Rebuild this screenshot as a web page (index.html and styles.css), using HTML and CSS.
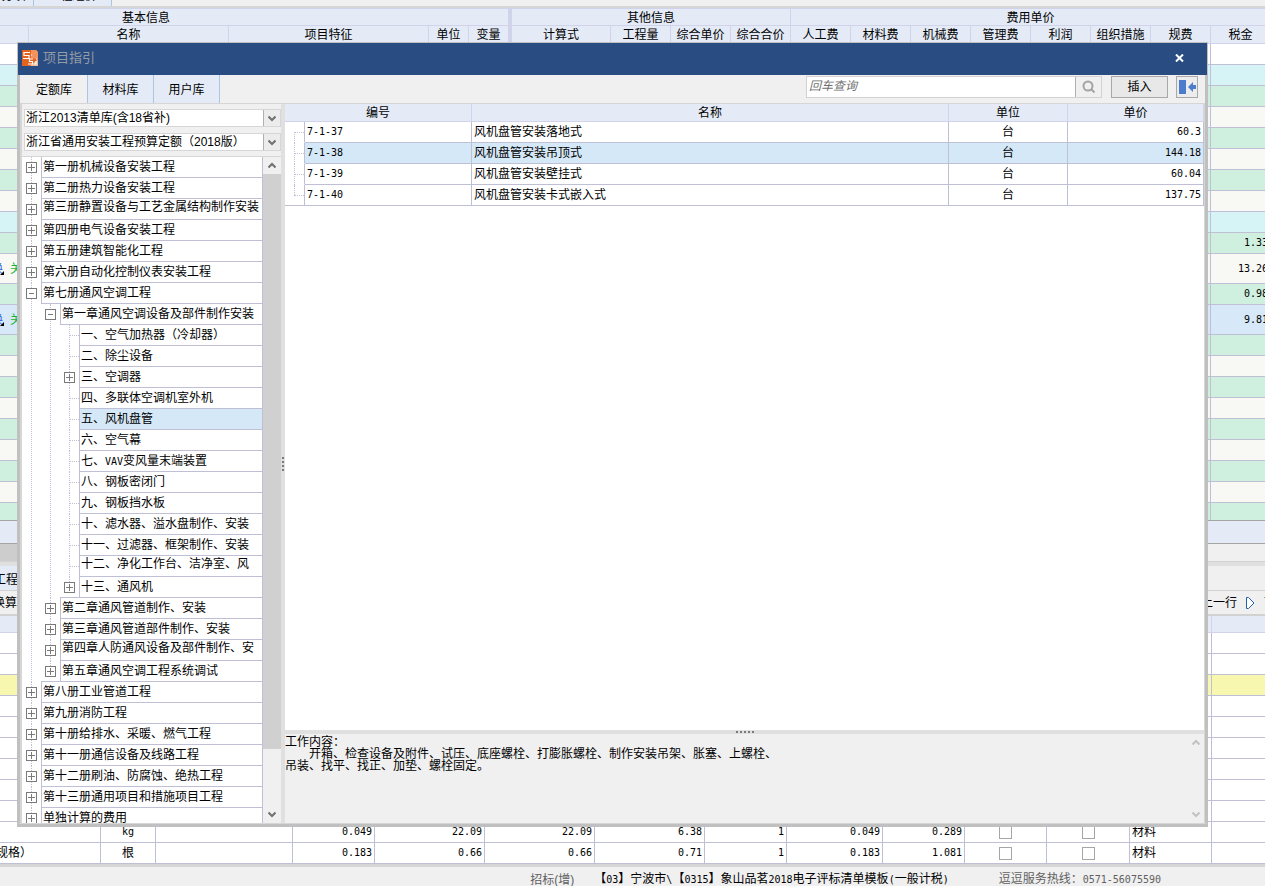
FILE: index.html
```html
<!DOCTYPE html>
<html lang="zh-CN">
<head>
<meta charset="utf-8">
<title>项目指引</title>
<link rel="stylesheet" href="styles.css">
</head>
<body>
<main class="app">
  <nav class="top-tabs">
    <button class="top-tab first" type="button">分部分项</button>
    <button class="top-tab" type="button">工程组价</button>
  </nav>
  <section class="bill">
    <table class="grid bill-grid">
      <colgroup>
        <col class="w-245"><col class="w-200"><col class="w-200"><col class="w-40"><col class="w-43"><col class="w-99">
        <col class="w-60"><col class="w-60"><col class="w-60"><col class="w-60"><col class="w-60"><col class="w-60"><col class="w-60"><col class="w-60"><col class="w-60"><col class="w-60"><col class="w-60">
      </colgroup>
      <thead>
        <tr class="groups"><th colspan="5" class="thick">基本信息</th><th colspan="4">其他信息</th><th colspan="8">费用单价</th></tr>
        <tr><th></th><th>名称</th><th>项目特征</th><th>单位</th><th class="thick">变量</th><th>计算式</th><th>工程量</th><th>综合单价</th><th>综合合价</th><th>人工费</th><th>材料费</th><th>机械费</th><th>管理费</th><th>利润</th><th>组织措施</th><th>规费</th><th>税金</th></tr>
      </thead>
      <tbody>
        <tr class="plain"><td></td><td colspan="15"></td><td></td></tr>
        <tr class="cyan"><td></td><td colspan="15"></td><td></td></tr>
        <tr class="green"><td></td><td colspan="15"></td><td></td></tr>
        <tr><td></td><td colspan="15"></td><td></td></tr>
        <tr class="green"><td></td><td colspan="15"></td><td></td></tr>
        <tr><td></td><td colspan="15"></td><td></td></tr>
        <tr class="green"><td></td><td colspan="15"></td><td></td></tr>
        <tr><td></td><td colspan="15"></td><td></td></tr>
        <tr class="cyan"><td></td><td colspan="15"></td><td></td></tr>
        <tr class="green"><td></td><td colspan="15"></td><td class="num">1.33</td></tr>
        <tr class="tall"><td><span class="marks"><span class="swap">换</span><svg class="corner" viewBox="0 0 4 4"><path d="M4 0v4H0z"/></svg><span class="link">关联</span></span></td><td colspan="15"></td><td class="num">13.26</td></tr>
        <tr class="green"><td></td><td colspan="15"></td><td class="num">0.98</td></tr>
        <tr class="tall current"><td><span class="marks"><span class="swap">换</span><svg class="corner" viewBox="0 0 4 4"><path d="M4 0v4H0z"/></svg><span class="link">关联</span></span></td><td colspan="15"></td><td class="num">9.81</td></tr>
        <tr class="green"><td></td><td colspan="15"></td><td></td></tr>
        <tr><td></td><td colspan="15"></td><td></td></tr>
        <tr class="green"><td></td><td colspan="15"></td><td></td></tr>
        <tr><td></td><td colspan="15"></td><td></td></tr>
        <tr class="green"><td></td><td colspan="15"></td><td></td></tr>
        <tr><td></td><td colspan="15"></td><td></td></tr>
        <tr class="green"><td></td><td colspan="15"></td><td></td></tr>
        <tr><td></td><td colspan="15"></td><td></td></tr>
        <tr class="green"><td></td><td colspan="15"></td><td></td></tr>
      </tbody>
    </table>
  </section>
  <div class="totals"></div>
  <div class="hscroll"><div class="hthumb"></div></div>
  <div class="gap-bar"></div>
  <nav class="detail-tabs"><button class="detail-tab" type="button">工程量计算</button></nav>
  <div class="toolbar">
    <button class="tool" type="button">换算</button>
    <div class="tool-set">
      <button class="tool" type="button">上一行</button>
      <svg class="play" viewBox="0 0 9 12"><path d="M.5 .5h2l5.500 5.500-5.500 5.500h-2z"/></svg>
      <button class="tool" type="button">下一行</button>
    </div>
  </div>
  <section class="detail">
    <table class="grid detail-grid">
      <colgroup>
        <col class="w-107"><col class="w-55"><col class="w-137"><col class="w-82"><col class="w-110"><col class="w-110"><col class="w-110"><col class="w-82"><col class="w-96"><col class="w-82"><col class="w-82"><col class="w-83"><col class="w-82"><col class="w-82">
      </colgroup>
      <thead><tr><th></th><th></th><th></th><th></th><th></th><th></th><th></th><th></th><th></th><th></th><th></th><th></th><th></th><th></th></tr></thead>
      <tbody>
        <tr><td></td><td colspan="12"></td><td></td></tr>
        <tr><td></td><td colspan="12"></td><td></td></tr>
        <tr class="yellow"><td></td><td colspan="12"></td><td></td></tr>
        <tr><td></td><td colspan="12"></td><td></td></tr>
        <tr><td></td><td colspan="12"></td><td></td></tr>
        <tr><td></td><td colspan="12"></td><td></td></tr>
        <tr><td></td><td colspan="12"></td><td></td></tr>
        <tr><td></td><td colspan="12"></td><td></td></tr>
        <tr><td></td><td colspan="12"></td><td></td></tr>
        <tr><td></td><td class="mid num">kg</td><td></td><td class="num">0.049</td><td class="num">22.09</td><td class="num">22.09</td><td class="num">6.38</td><td class="num">1</td><td class="num">0.049</td><td class="num">0.289</td><td class="mid"><input type="checkbox" aria-label="暂估"></td><td class="mid"><input type="checkbox" aria-label="甲供"></td><td>材料</td><td></td></tr>
        <tr><td>规格）</td><td class="mid">根</td><td></td><td class="num">0.183</td><td class="num">0.66</td><td class="num">0.66</td><td class="num">0.71</td><td class="num">1</td><td class="num">0.183</td><td class="num">1.081</td><td class="mid"><input type="checkbox" aria-label="暂估"></td><td class="mid"><input type="checkbox" aria-label="甲供"></td><td>材料</td><td></td></tr>
      </tbody>
    </table>
  </section>
  <footer class="status">
    <span class="muted">招标(增)</span>
    <span class="file">【<span class="n">03</span>】宁波市<span class="n">\</span>【<span class="n">0315</span>】象山品茗<span class="n">2018</span>电子评标清单模板<span class="n">(</span>一般计税<span class="n">)</span></span>
    <span class="muted">逗逗服务热线：<span class="n">0571-56075590</span></span>
  </footer>
</main>

<div class="dialog" role="dialog" aria-labelledby="dialog-title">
  <header class="title-bar">
    <svg class="logo" viewBox="0 0 16 16"><path fill="#e4631f" d="M0 0h14l2 2v14H0z"/><path fill="#f0935f" d="M9 0h5l2 2v7L9 8z"/><path fill="#f0b896" d="M8 16l8-7v7z"/><path fill="none" stroke="#fff" stroke-width="1.200" d="M8 2.500H2v3h5v3H1M9.500 4.500v1M11 9H7.500v2.500h3V14H6"/><path fill="none" stroke="#fff" stroke-width="1.200" d="M14.500 8.500v1M14 11v3h-2"/></svg>
    <h1 id="dialog-title">项目指引</h1>
    <button class="close" type="button" aria-label="关闭"><svg viewBox="0 0 9 8"><path d="M1 0.500l7 7M8 .5l-7 7"/></svg></button>
  </header>
  <div class="dialog-body">
    <div class="head">
      <div class="tabs" role="tablist">
        <button class="tab active" role="tab" aria-selected="true" type="button">定额库</button>
        <button class="tab" role="tab" type="button">材料库</button>
        <button class="tab" role="tab" type="button">用户库</button>
      </div>
      <div class="actions">
        <div class="search">
          <input type="text" placeholder="回车查询" aria-label="查询">
          <button type="button" aria-label="搜索"><svg viewBox="0 0 14 14"><circle cx="6" cy="6" r="4.500"/><path d="M9 9l3.500 3.500"/></svg></button>
        </div>
        <button class="insert" type="button">插入</button>
        <button class="dock" type="button" aria-label="停靠"><svg viewBox="0 0 20 16"><path d="M2 1h7v14H2zM11 8l5-5v3h3v4h-3v3z"/></svg></button>
      </div>
    </div>
    <div class="panes">
      <aside class="side">
        <div class="pick"><select aria-label="清单库"><option>浙江2013清单库(含18省补)</option></select><span class="drop"><svg viewBox="0 0 8 7"><path d="M.5 1.500L4 5l3.500-3.500"/></svg></span></div>
        <div class="pick"><select aria-label="定额"><option>浙江省通用安装工程预算定额（2018版）</option></select><span class="drop"><svg viewBox="0 0 8 7"><path d="M.5 1.500L4 5l3.500-3.500"/></svg></span></div>
        <div class="tree-box">
          <ul class="tree">
            <li><div class="row"><button class="knob plus" type="button" aria-label="展开"></button><span class="label">第一册机械设备安装工程</span></div></li>
            <li><div class="row"><button class="knob plus" type="button" aria-label="展开"></button><span class="label">第二册热力设备安装工程</span></div></li>
            <li><div class="row"><button class="knob plus" type="button" aria-label="展开"></button><span class="label long">第三册静置设备与工艺金属结构制作安装</span></div></li>
            <li><div class="row"><button class="knob plus" type="button" aria-label="展开"></button><span class="label">第四册电气设备安装工程</span></div></li>
            <li><div class="row"><button class="knob plus" type="button" aria-label="展开"></button><span class="label">第五册建筑智能化工程</span></div></li>
            <li><div class="row"><button class="knob plus" type="button" aria-label="展开"></button><span class="label">第六册自动化控制仪表安装工程</span></div></li>
            <li><div class="row"><button class="knob" type="button" aria-label="收起"></button><span class="label">第七册通风空调工程</span></div>
              <ul>
                <li><div class="row"><button class="knob" type="button" aria-label="收起"></button><span class="label">第一章通风空调设备及部件制作安装</span></div>
                  <ul>
                    <li><div class="row"><span class="leaf"></span><span class="label">一、空气加热器（冷却器）</span></div></li>
                    <li><div class="row"><span class="leaf"></span><span class="label">二、除尘设备</span></div></li>
                    <li><div class="row"><button class="knob plus" type="button" aria-label="展开"></button><span class="label">三、空调器</span></div></li>
                    <li><div class="row"><span class="leaf"></span><span class="label">四、多联体空调机室外机</span></div></li>
                    <li><div class="row"><span class="leaf"></span><span class="label chosen">五、风机盘管</span></div></li>
                    <li><div class="row"><span class="leaf"></span><span class="label">六、空气幕</span></div></li>
                    <li><div class="row"><span class="leaf"></span><span class="label">七、<span class="n">VAV</span>变风量末端装置</span></div></li>
                    <li><div class="row"><span class="leaf"></span><span class="label">八、钢板密闭门</span></div></li>
                    <li><div class="row"><span class="leaf"></span><span class="label">九、钢板挡水板</span></div></li>
                    <li><div class="row"><span class="leaf"></span><span class="label">十、滤水器、溢水盘制作、安装</span></div></li>
                    <li><div class="row"><span class="leaf"></span><span class="label">十一、过滤器、框架制作、安装</span></div></li>
                    <li><div class="row"><span class="leaf"></span><span class="label long">十二、净化工作台、洁净室、风</span></div></li>
                    <li class="last"><div class="row"><button class="knob plus" type="button" aria-label="展开"></button><span class="label">十三、通风机</span></div></li>
                  </ul>
                </li>
                <li><div class="row"><button class="knob plus" type="button" aria-label="展开"></button><span class="label">第二章通风管道制作、安装</span></div></li>
                <li><div class="row"><button class="knob plus" type="button" aria-label="展开"></button><span class="label">第三章通风管道部件制作、安装</span></div></li>
                <li><div class="row"><button class="knob plus" type="button" aria-label="展开"></button><span class="label long">第四章人防通风设备及部件制作、安</span></div></li>
                <li class="last"><div class="row"><button class="knob plus" type="button" aria-label="展开"></button><span class="label">第五章通风空调工程系统调试</span></div></li>
              </ul>
            </li>
            <li><div class="row"><button class="knob plus" type="button" aria-label="展开"></button><span class="label">第八册工业管道工程</span></div></li>
            <li><div class="row"><button class="knob plus" type="button" aria-label="展开"></button><span class="label">第九册消防工程</span></div></li>
            <li><div class="row"><button class="knob plus" type="button" aria-label="展开"></button><span class="label">第十册给排水、采暖、燃气工程</span></div></li>
            <li><div class="row"><button class="knob plus" type="button" aria-label="展开"></button><span class="label">第十一册通信设备及线路工程</span></div></li>
            <li><div class="row"><button class="knob plus" type="button" aria-label="展开"></button><span class="label">第十二册刷油、防腐蚀、绝热工程</span></div></li>
            <li><div class="row"><button class="knob plus" type="button" aria-label="展开"></button><span class="label">第十三册通用项目和措施项目工程</span></div></li>
            <li class="last"><div class="row"><button class="knob plus" type="button" aria-label="展开"></button><span class="label">单独计算的费用</span></div></li>
          </ul>
          <div class="scroll">
            <button type="button" aria-label="向上"><svg viewBox="0 0 8 7"><path d="M.5 5.500L4 2l3.500 3.500"/></svg></button>
            <div class="track"><div class="thumb"></div></div>
            <button type="button" aria-label="向下"><svg viewBox="0 0 8 7"><path d="M.5 1.500L4 5l3.500-3.500"/></svg></button>
          </div>
        </div>
      </aside>
      <div class="splitter"><i></i><i></i><i></i><i></i></div>
      <section class="main-pane">
        <div class="quota">
          <table class="quota-grid">
            <colgroup><col class="q-branch"><col class="q-code"><col><col class="q-unit"><col class="q-price"></colgroup>
            <thead><tr><th colspan="2">编号</th><th>名称</th><th>单位</th><th>单价</th></tr></thead>
            <tbody>
              <tr><td class="branch start"></td><td class="code">7-1-37</td><td>风机盘管安装落地式</td><td class="mid">台</td><td class="num">60.3</td></tr>
              <tr class="chosen"><td class="branch"></td><td class="code">7-1-38</td><td>风机盘管安装吊顶式</td><td class="mid">台</td><td class="num">144.18</td></tr>
              <tr><td class="branch"></td><td class="code">7-1-39</td><td>风机盘管安装壁挂式</td><td class="mid">台</td><td class="num">60.04</td></tr>
              <tr><td class="branch end"></td><td class="code">7-1-40</td><td>风机盘管安装卡式嵌入式</td><td class="mid">台</td><td class="num">137.75</td></tr>
            </tbody>
          </table>
        </div>
        <div class="hsplitter"><i></i><i></i><i></i><i></i><i></i></div>
        <div class="work">
          <div class="work-text">
            <p>工作内容：</p>
            <p class="indent">开箱、检查设备及附件、试压、底座螺栓、打膨胀螺栓、制作安装吊架、胀塞、上螺栓、</p>
            <p>吊装、找平、找正、加垫、螺栓固定。</p>
          </div>
          <div class="work-scroll">
            <svg viewBox="0 0 8 7"><path d="M.5 5.500L4 2l3.500 3.500"/></svg>
            <svg viewBox="0 0 8 7"><path d="M.5 1.500L4 5l3.500-3.500"/></svg>
          </div>
        </div>
      </section>
    </div>
  </div>
</div>
</body>
</html>
```

FILE: styles.css
```css
:root {
  --line: #bfbfd6;
  --head: #e4ebf7;
  --head-line: #d0d3ea;
  --panel: #f0f0f0;
  --pick: #d5e8f8;
}

* { box-sizing: border-box; }

body {
  margin: 0;
  height: 100vh;
  overflow: hidden;
  position: relative;
  background: var(--panel);
  color: #000;
  font: 12px/12px "Liberation Sans", "Noto Sans CJK SC", sans-serif;
}

button, input, select { font: inherit; color: inherit; margin: 0; }
button { padding: 0; border: 0; background: none; white-space: nowrap; }
h1, p, ul { margin: 0; padding: 0; }
ul { list-style: none; }
svg { display: block; flex: none; }

.n, .num, .code { font-family: "DejaVu Sans Mono", monospace; font-size: 10px; }

/* application window */
.app { height: 100%; display: flex; flex-direction: column; overflow: hidden; }
.app > * { flex: none; }

.top-tabs {
  height: 8px;
  display: flex;
  align-items: flex-end;
  overflow: hidden;
  border-bottom: 2px solid #d6d6d6;
}
.top-tab {
  width: 78px;
  height: 24px;
  padding-top: 8px;
  background: var(--head);
  border-right: 1px solid #a9c6e3;
  line-height: 12px;
}
.top-tab { display: flex; align-items: flex-start; justify-content: center; }
.top-tab.first { width: 64px; margin-left: -30px; }

.grid { table-layout: fixed; border-collapse: separate; border-spacing: 0; }
.grid th {
  padding: 0;
  font-weight: 400;
  text-align: center;
  background: var(--head);
  border-right: 1px solid var(--head-line);
  border-bottom: 1px solid var(--head-line);
}
.grid td {
  height: 21px;
  padding: 0 2px;
  border-right: 1px solid var(--line);
  border-bottom: 1px solid var(--line);
  white-space: nowrap;
  overflow: hidden;
}
.grid .num { text-align: right; }
.grid .mid { text-align: center; }

.app > .bill { flex: 1; overflow: hidden; min-height: 0; }
.bill-grid { width: 1487px; margin-left: -216px; background: #f8f9f5; }
.bill-grid th { height: 18px; padding-top: 1px; }
.bill-grid .groups th { border-top: 1px solid var(--head-line); }
.bill-grid .thick { border-right-width: 4px; }
.bill-grid .plain td { background: #fff; }
.bill-grid .cyan td { background: #d6f4f6; }
.bill-grid .green td { background: #d0f0df; }
.bill-grid .current td { background: #d7e8f8; }
.bill-grid .tall td { height: 30px; }
.marks { display: flex; justify-content: flex-end; align-items: flex-end; }
.swap { color: #2d5fe0; }
.corner { width: 4px; height: 4px; margin-right: 6px; margin-left: -3px; }
.link { color: #12b53a; margin-right: -8px; }

.w-245 { width: 245px; }
.w-200 { width: 200px; }
.w-137 { width: 137px; }
.w-110 { width: 110px; }
.w-107 { width: 107px; }
.w-99 { width: 99px; }
.w-96 { width: 96px; }
.w-83 { width: 83px; }
.w-82 { width: 82px; }
.w-60 { width: 60px; }
.w-55 { width: 55px; }
.w-43 { width: 43px; }
.w-40 { width: 40px; }

.totals { height: 24px; background: var(--head); border: solid #a5a5a5; border-width: 1px 0; }
.hscroll { height: 17px; background: var(--panel); }
.hthumb { width: 60%; height: 100%; background: #cdcdcd; }
.gap-bar { height: 5px; background: #e0e0e0; border-top: 1px solid #d2d2d2; }
.detail-tabs { height: 25px; border-bottom: 1px solid #d2d2d2; }
.detail-tab { height: 24px; margin-left: -6px; padding-top: 4px; background: var(--head); }
.toolbar {
  height: 25px;
  display: flex;
  align-items: center;
  justify-content: space-between;
  margin: 0 -35px 0 -7px;
  border-bottom: 2px solid #d2d2d2;
}
.tool-set { display: flex; align-items: center; gap: 9px; }
.play { width: 9px; height: 12px; fill: #fff; stroke: #2060a8; }

.detail { overflow: hidden; border-bottom: 3px solid #d6d6d6; }
.detail-grid { width: 1300px; margin-left: -6px; background: #fff; }
.detail-grid th { height: 17px; }
.detail-grid .yellow td { background: #f8f7b0; }
.detail-grid input {
  appearance: none;
  display: block;
  width: 13px;
  height: 13px;
  margin: 0 auto;
  background: #fff;
  border: 1px solid #a6a6a6;
}

.status {
  height: 19px;
  display: flex;
  align-items: center;
  justify-content: flex-end;
  gap: 50px;
  padding: 6px 104px 0 0;
  white-space: nowrap;
}
.status .file { margin-left: -30px; }
.muted { color: #606060; }

/* guide dialog */
.dialog {
  position: absolute;
  inset: 42px 57px 59px 17px;
  display: flex;
  flex-direction: column;
  border: solid #c0c0c0;
  border-width: 1px 1px 3px;
}
.title-bar {
  height: 32px;
  flex: none;
  display: flex;
  align-items: center;
  padding: 0 23px 2px 4px;
  background: #294d82;
}
.logo { width: 16px; height: 16px; }
.title-bar h1 { flex: 1; margin-left: 5px; font-size: 13px; line-height: 16px; font-weight: 400; color: #949ba5; }
.close svg { width: 9px; height: 8px; stroke: #fff; stroke-width: 2; }

.dialog-body {
  flex: 1;
  min-height: 0;
  display: flex;
  flex-direction: column;
  background: var(--panel);
  border: solid #c0c0c0;
  border-width: 0 2px;
  border-bottom: 1px solid #d6d6d6;
}
.head {
  flex: none;
  display: flex;
  height: 29px;
  padding-right: 7px;
  border-bottom: 1px solid #d6d6d6;
}
.tabs { display: flex; padding-left: 1px; flex: 1; }
.tab {
  width: 66px;
  height: 28px;
  padding-top: 2px;
  background: var(--head);
  border-right: 1px solid #a9c6e3;
}
.tab.active { width: 67px; background: var(--panel); }
.actions { display: flex; gap: 8px; padding-top: 1px; }
.search { display: flex; width: 296px; height: 22px; border: 1px solid #d2d2d2; background: #fff; margin-right: 1px; }
.search input { flex: 1; min-width: 0; border: 0; padding: 0 2px 3px; background: #fff; outline: 0; }
.search input::placeholder { color: #707070; font-style: italic; opacity: 1; }
.search button { width: 26px; display: grid; place-items: center; background: var(--panel); border-left: 1px solid #b0b0b0; }
.search svg { width: 14px; height: 14px; fill: none; stroke: #a4a4a4; stroke-width: 2; }
.insert { width: 57px; height: 22px; background: #e8e8e8; border: 1px solid #a8a8a8; }
.dock { width: 22px; height: 22px; display: grid; place-items: center; background: #ececec; border: 1px solid #a8a8a8; }
.dock svg { width: 20px; height: 16px; fill: #4b7dcc; }

.panes { flex: 1; min-height: 0; display: flex; }
.side { width: 261px; flex: none; display: flex; flex-direction: column; padding-top: 5px; border-left: 2px solid #d6d6d6; }
.pick { position: relative; flex: none; height: 18px; margin: 0 0 6px 2px; }
.pick + .pick { margin-bottom: 5px; }
.pick select {
  appearance: none;
  width: 100%;
  height: 18px;
  padding: 0 20px 0 1px;
  background: #fff;
  border: 1px solid #d6d6d6;
  border-radius: 0;
  line-height: 16px;
}
.drop {
  position: absolute;
  inset: 1px 1px 1px auto;
  width: 17px;
  display: grid;
  place-items: center;
  background: #ececec;
  border-left: 1px solid #b0b0b0;
  pointer-events: none;
}
.drop svg, .scroll svg { width: 8px; height: 7px; fill: none; stroke: #707070; stroke-width: 2; }

.tree-box { flex: 1; min-height: 0; display: flex; border-top: 1px solid #d6d6d6; background: #fff; }
.tree { flex: 1; min-width: 0; overflow: hidden; border-right: 1px solid var(--line); }
.tree li { position: relative; }
.tree ul { padding-left: 19px; }
.tree li::before {
  content: "";
  position: absolute;
  left: 9px;
  top: 0;
  bottom: 0;
  border-left: 1px dotted var(--line);
}
.tree li.last::before { bottom: auto; height: 11px; }
.row { position: relative; display: flex; align-items: center; height: 21px; }
.knob {
  flex: none;
  width: 11px;
  height: 11px;
  margin: 0 4px;
  border: 1px solid #7a7a7a;
  background: linear-gradient(#7a7a7a, #7a7a7a) center / 5px 1px no-repeat #fff;
}
.knob.plus {
  background:
    linear-gradient(#7a7a7a, #7a7a7a) center / 7px 1px no-repeat,
    linear-gradient(#7a7a7a, #7a7a7a) center / 1px 7px no-repeat #fff;
}
.leaf { flex: none; width: 9px; height: 1px; margin-left: 10px; border-top: 1px dotted var(--line); }
.label {
  flex: 1;
  min-width: 0;
  align-self: stretch;
  margin-top: -1px;
  padding: 4px 0 0 1px;
  border: 1px solid var(--line);
  border-right: 0;
  background: #fff;
  white-space: nowrap;
  overflow: hidden;
}
.label.long { padding-top: 2px; }
.label.chosen { background: var(--pick); }

.scroll { width: 18px; flex: none; display: flex; flex-direction: column; background: var(--panel); }
.scroll button { height: 17px; display: grid; place-items: center; }
.track { flex: 1; }
.thumb { height: 91%; background: #d0d0d0; }

.splitter, .hsplitter { flex: none; display: flex; align-items: center; justify-content: center; gap: 2px; background: #e0e0e0; }
.splitter { width: 4px; flex-direction: column; }
.hsplitter { height: 4px; }
.splitter i, .hsplitter i { width: 2px; height: 2px; background: #7a7a7a; }

.main-pane { flex: 1; min-width: 0; display: flex; flex-direction: column; border-right: 1px solid #d6d6d6; }
.quota { flex: 1; min-height: 0; background: #fff; }
.quota-grid { width: 100%; table-layout: fixed; border-collapse: separate; border-spacing: 0; }
.quota-grid th {
  height: 18px;
  padding: 0;
  font-weight: 400;
  background: var(--head);
  border-right: 1px solid var(--head-line);
  border-bottom: 1px solid var(--head-line);
}
.quota-grid td { height: 21px; padding: 0 2px; border-right: 1px solid var(--line); border-bottom: 1px solid var(--line); }
.quota-grid .chosen td:not(.branch) { background: var(--pick); }
.quota-grid .mid { text-align: center; }
.quota-grid .num { text-align: right; }
.quota-grid .branch { position: relative; border-bottom-color: transparent; }
.quota-grid .branch.end { border-bottom-color: var(--line); }
.branch::before, .branch::after { content: ""; position: absolute; left: 9px; }
.branch::before { top: 0; bottom: -1px; border-left: 1px dotted var(--line); }
.branch::after { top: 10px; right: 0; border-top: 1px dotted var(--line); }
.branch.start::before { top: 10px; }
.branch.end::before { bottom: 10px; }
.q-branch { width: 20px; }
.q-code { width: 167px; }
.q-unit { width: 119px; }
.q-price { width: 136px; }

.work { flex: none; height: 89px; display: flex; justify-content: space-between; background: var(--panel); }
.work-text { padding-top: 2px; }
.work-text .indent { padding-left: 24px; }
.work-scroll { width: 17px; display: flex; flex-direction: column; justify-content: space-between; align-items: center; padding: 5px 0; }
.work-scroll svg { width: 8px; height: 7px; fill: none; stroke: #c2c2c2; stroke-width: 2; }
```
